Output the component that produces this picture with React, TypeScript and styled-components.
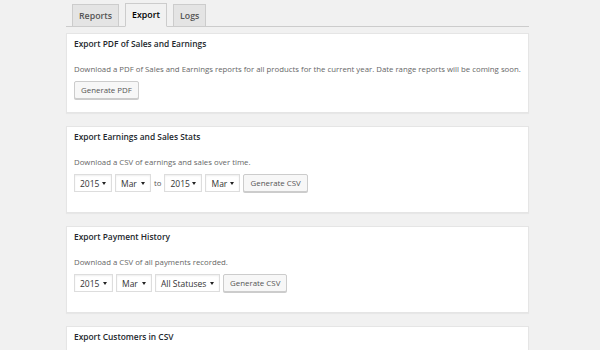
import styled, { createGlobalStyle } from "styled-components";

const GlobalStyle = createGlobalStyle`
  body {
    margin: 0;
    background: #f1f1f1;
    font-family: "Open Sans", "Liberation Sans", sans-serif;
    color: #444;
  }
`;

const Page = styled.div`
  width: 463px;
  padding-left: 66px;
  padding-top: 4px;
`;

const TabBar = styled.div`
  display: flex;
  gap: 6px;
  padding-left: 6px;
  border-bottom: 1px solid #ccc;
  height: 22px;
`;

const Tab = styled.div<{ $active?: boolean }>`
  box-sizing: border-box;
  height: ${(p) => (p.$active ? "24px" : "23px")};
  margin-top: ${(p) => (p.$active ? "-1px" : "0")};
  padding: 0 6px;
  display: flex;
  align-items: center;
  font-size: 8.8px;
  font-weight: 600;
  color: ${(p) => (p.$active ? "#000" : "#555")};
  background: ${(p) => (p.$active ? "#f1f1f1" : "#e4e4e4")};
  border: 1px solid #ccc;
  border-bottom: ${(p) => (p.$active ? "1px solid #f1f1f1" : "1px solid #ccc")};
`;

const Cards = styled.div`
  display: flex;
  flex-direction: column;
  gap: 13px;
  margin-top: 6px;
`;

const Card = styled.section<{ $bottom: number }>`
  background: #fff;
  border: 1px solid #e5e5e5;
  box-shadow: 0 1px 1px rgba(0, 0, 0, 0.04);
  padding: 5px 7px ${(p) => p.$bottom}px;
`;

const Title = styled.h3`
  margin: 0;
  font-size: 8.4px;
  line-height: 10px;
  font-weight: 600;
  color: #23282d;
`;

const Desc = styled.p`
  margin: 15px 0 0;
  font-size: 7.8px;
  line-height: 10px;
  color: #666;
`;

const Controls = styled.div`
  display: flex;
  align-items: center;
  gap: 3px;
  margin-top: 7px;
`;

const SelectBox = styled.div<{ $w: number }>`
  box-sizing: border-box;
  width: ${(p) => p.$w}px;
  height: 18px;
  border: 1px solid #ddd;
  background: #fff;
  box-shadow: inset 0 1px 2px rgba(0, 0, 0, 0.07);
  display: flex;
  align-items: center;
  justify-content: space-between;
  padding: 0 5px;
  font-size: 8.5px;
  color: #333;
`;

const Caret = styled.span`
  width: 0;
  height: 0;
  border-left: 2px solid transparent;
  border-right: 2px solid transparent;
  border-top: 3px solid #222;
`;

const Word = styled.span`
  font-size: 7.8px;
  color: #555;
`;

const Button = styled.button`
  box-sizing: border-box;
  height: 18px;
  padding: 0 6px;
  border: 1px solid #ccc;
  border-radius: 2px;
  background: #f7f7f7;
  box-shadow: 0 1px 0 #ccc;
  font-family: inherit;
  font-size: 7.9px;
  color: #555;
  cursor: pointer;
`;

const Select = ({ value, width }: { value: string; width: number }) => (
  <SelectBox $w={width}>
    <span>{value}</span>
    <Caret />
  </SelectBox>
);

export default function App() {
  return (
    <Page>
      <GlobalStyle />
      <TabBar>
        <Tab>Reports</Tab>
        <Tab $active>Export</Tab>
        <Tab>Logs</Tab>
      </TabBar>
      <Cards>
        <Card $bottom={13}>
          <Title>Export PDF of Sales and Earnings</Title>
          <Desc>
            Download a PDF of Sales and Earnings reports for all products for the current year. Date
            range reports will be coming soon.
          </Desc>
          <Controls>
            <Button>Generate PDF</Button>
          </Controls>
        </Card>
        <Card $bottom={20}>
          <Title>Export Earnings and Sales Stats</Title>
          <Desc>Download a CSV of earnings and sales over time.</Desc>
          <Controls>
            <Select value="2015" width={38} />
            <Select value="Mar" width={36} />
            <Word>to</Word>
            <Select value="2015" width={38} />
            <Select value="Mar" width={35} />
            <Button>Generate CSV</Button>
          </Controls>
        </Card>
        <Card $bottom={20}>
          <Title>Export Payment History</Title>
          <Desc>Download a CSV of all payments recorded.</Desc>
          <Controls>
            <Select value="2015" width={39} />
            <Select value="Mar" width={36} />
            <Select value="All Statuses" width={65} />
            <Button>Generate CSV</Button>
          </Controls>
        </Card>
        <Card $bottom={20}>
          <Title>Export Customers in CSV</Title>
        </Card>
      </Cards>
    </Page>
  );
}
